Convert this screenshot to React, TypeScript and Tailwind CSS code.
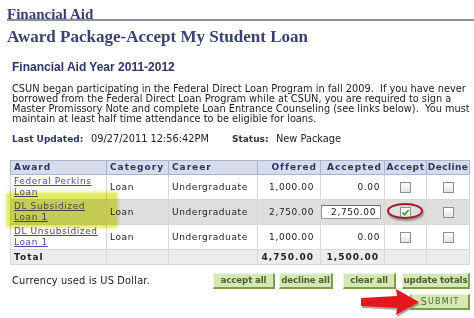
import React from 'react'

const ROWS = [
  { award: ['Federal Perkins', 'Loan'], offered: '1,000.00', accepted: '0.00', hl: false },
  { award: ['DL Subsidized', 'Loan 1'], offered: '2,750.00', accepted: '2,750.00', hl: true },
  { award: ['DL Unsubsidized', 'Loan 1'], offered: '1,000.00', accepted: '0.00', hl: false },
]

function Box({ checked = false }: { checked?: boolean }) {
  return (
    <span className="inline-flex w-[11px] h-[11px] items-center justify-center border border-[#8f8f8f] bg-gradient-to-b from-white to-[#e4e4e4] align-middle">
      {checked && (
        <svg width="9" height="9" viewBox="0 0 9 9">
          <path d="M1.5 4.5 L3.6 6.8 L7.6 2" stroke="#3f9a2a" strokeWidth="1.6" fill="none" />
        </svg>
      )}
    </span>
  )
}

function Btn({ children, className = '' }: { children: React.ReactNode; className?: string }) {
  return (
    <span
      className={`inline-flex h-[16px] items-center justify-center whitespace-nowrap bg-[#d5e8b3] border-l border-t border-[#eef6dd] border-r-2 border-b-2 border-r-[#7d9f4c] border-b-[#7d9f4c] text-[8.7px] tracking-[-0.15px] font-bold text-[#4c5e33] leading-none ${className}`}
    >
      {children}
    </span>
  )
}

export default function App() {
  const verdana = { fontFamily: '"DejaVu Sans", Verdana, sans-serif' }
  const serif = { fontFamily: '"Liberation Serif", "Times New Roman", serif' }
  return (
    <div className="relative w-[474px] h-[318px] overflow-hidden bg-white" style={verdana}>
      {/* ── Page headings ── */}
      <div className="ml-[7px] pt-[2px] border-b-2 border-[#8f8fa8] h-[21px]">
        <span className="text-[15px] font-bold text-[#3b4271] leading-[16px]" style={serif}>
          Financial Aid
        </span>
      </div>
      <div className="ml-[7px] mt-[7px] text-[17px] font-bold text-[#3b4271] leading-[18px]" style={serif}>
        Award Package-Accept My Student Loan
      </div>
      <div className="ml-[12px] mt-[14px] text-[12px] font-bold text-[#2c3566] leading-[14px]" style={{ fontFamily: '"Liberation Sans", Arial, sans-serif' }}>
        Financial Aid Year 2011-2012
      </div>

      {/* ── Intro text ── */}
      <p className="ml-[12px] mt-[10px] text-[9.8px] leading-[10px] text-[#1c1c1c]">
        CSUN began participating in the Federal Direct Loan Program in fall 2009.&nbsp; If you have never<br />
        borrowed from the Federal Direct Loan Program while at CSUN, you are required to sign a<br />
        Master Promissory Note and complete Loan Entrance Counseling (see links below).&nbsp; You must<br />
        maintain at least half time attendance to be eligible for loans.
      </p>

      <div className="flex items-baseline ml-[12px] mt-[10px] text-[9.8px] leading-[10px]">
        <span className="w-[79px] text-[9px] font-bold text-[#2c3566]">Last Updated:</span>
        <span className="w-[141px] text-[#222]">09/27/2011 12:56:42PM</span>
        <span className="w-[44px] text-[9px] font-bold text-[#2c3566]">Status:</span>
        <span className="text-[#222]">New Package</span>
      </div>

      {/* ── Award table ── */}
      <table className="ml-[10px] mt-[16px] border-collapse border border-[#b9c2d6] text-[9px] tracking-[0.6px] text-[#222] table-fixed w-[459px]">
        <colgroup>
          <col className="w-[96px]" />
          <col className="w-[62px]" />
          <col className="w-[89px]" />
          <col className="w-[63px]" />
          <col className="w-[64px]" />
          <col className="w-[42px]" />
          <col className="w-[43px]" />
        </colgroup>
        <thead>
          <tr className="h-[14px] bg-[#d7dcea] text-[#2c3566] font-bold tracking-[1px] leading-[13px]">
            <th className="border border-[#a9b5cf] text-left pl-[3px] font-bold">Award</th>
            <th className="border border-[#a9b5cf] text-left pl-[3px] font-bold">Category</th>
            <th className="border border-[#a9b5cf] text-left pl-[3px] font-bold">Career</th>
            <th className="border border-[#a9b5cf] text-right pr-[3px] font-bold">Offered</th>
            <th className="border border-[#a9b5cf] text-right pr-[2px] font-bold">Accepted</th>
            <th className="border border-[#a9b5cf] text-center font-bold tracking-[0.6px]">Accept</th>
            <th className="border border-[#a9b5cf] text-center font-bold tracking-[0.4px]">Decline</th>
          </tr>
        </thead>
        <tbody>
          {ROWS.map((r) => (
            <tr key={r.award[0]} className={`h-[25px] leading-[11px] ${r.hl ? 'bg-[#dedede]' : 'bg-white'}`}>
              <td className="border border-[#d8d8d8] pl-[3px]">
                <span className="text-[#4a4aa6] underline">{r.award[0]}</span>
                <br />
                <span className="text-[#4a4aa6] underline">{r.award[1]}</span>
              </td>
              <td className="border border-[#d8d8d8] pl-[3px]">Loan</td>
              <td className="border border-[#d8d8d8] pl-[3px]">Undergraduate</td>
              <td className="border border-[#d8d8d8] text-right pr-[6px]">{r.offered}</td>
              <td className="border border-[#d8d8d8] text-right pr-[4px]">
                {r.hl ? (
                  <span className="inline-block w-[60px] h-[14px] bg-white border border-[#9a9a9a] border-t-[#6f6f6f] text-right pr-[4px] leading-[12px]">
                    {r.accepted}
                  </span>
                ) : (
                  r.accepted
                )}
              </td>
              <td className="border border-[#d8d8d8] text-center">
                <Box checked={r.hl} />
              </td>
              <td className="border border-[#d8d8d8] text-center">
                <Box />
              </td>
            </tr>
          ))}
          <tr className="h-[15px] bg-[#ececec] font-bold tracking-[1px] leading-[13px]">
            <td className="border border-[#d8d8d8] pl-[3px]">Total</td>
            <td className="border border-[#d8d8d8]" />
            <td className="border border-[#d8d8d8]" />
            <td className="border border-[#d8d8d8] text-right pr-[6px]">4,750.00</td>
            <td className="border border-[#d8d8d8] text-right pr-[5px]">1,500.00</td>
            <td className="border border-[#d8d8d8]" />
            <td className="border border-[#d8d8d8]" />
          </tr>
        </tbody>
      </table>

      {/* ── Footer buttons ── */}
      <div className="flex items-end ml-[12px] mr-[4px] mt-[8px]">
        <span className="text-[9.8px] tracking-[0.2px] text-[#222] leading-[12px] mb-[2px]">Currency used is US Dollar.</span>
        <div className="ml-auto flex">
          <Btn className="w-[62px]">accept all</Btn>
          <Btn className="ml-[4px] w-[54px]">decline all</Btn>
          <Btn className="ml-[10px] w-[53px]">clear all</Btn>
          <Btn className="ml-[6px] w-[68px]">update totals</Btn>
        </div>
      </div>
      <div className="flex justify-end mr-[4px] mt-[5px]">
        <span className="inline-flex w-[60px] h-[16px] items-center justify-center gap-0 bg-[#d5e8b3] border-l-2 border-l-[#a8c47a] border-t border-t-[#eef6dd] border-r-2 border-b-2 border-r-[#7d9f4c] border-b-[#7d9f4c] text-[#4c6a3e] tracking-[1.2px] leading-none">
          <span className="text-[10px]">S</span>
          <span className="text-[8px]">UBMIT</span>
        </span>
      </div>

      {/* ── Annotations ── */}
      <div className="absolute left-[6px] top-[192px] w-[112px] h-[36px] bg-[#dce538] opacity-80 mix-blend-multiply blur-[1.5px] rounded-[3px]" />
      <div className="absolute left-[387px] top-[203px] w-[36px] h-[16px] rounded-[50%] border-2 border-[#a5152c] shadow-[1px_2px_2px_rgba(0,0,0,0.35)]" />
      <svg className="absolute left-[359px] top-[287px]" width="62" height="30" viewBox="0 0 62 30">
        <polygon points="2,11 38,9 37,2 60,15 37,28 38,21 2,19" fill="#555" opacity="0.5" transform="translate(1,2)" />
        <polygon points="2,11 38,9 37,2 60,15 37,28 38,21 2,19" fill="#e5161c" />
      </svg>
    </div>
  )
}
